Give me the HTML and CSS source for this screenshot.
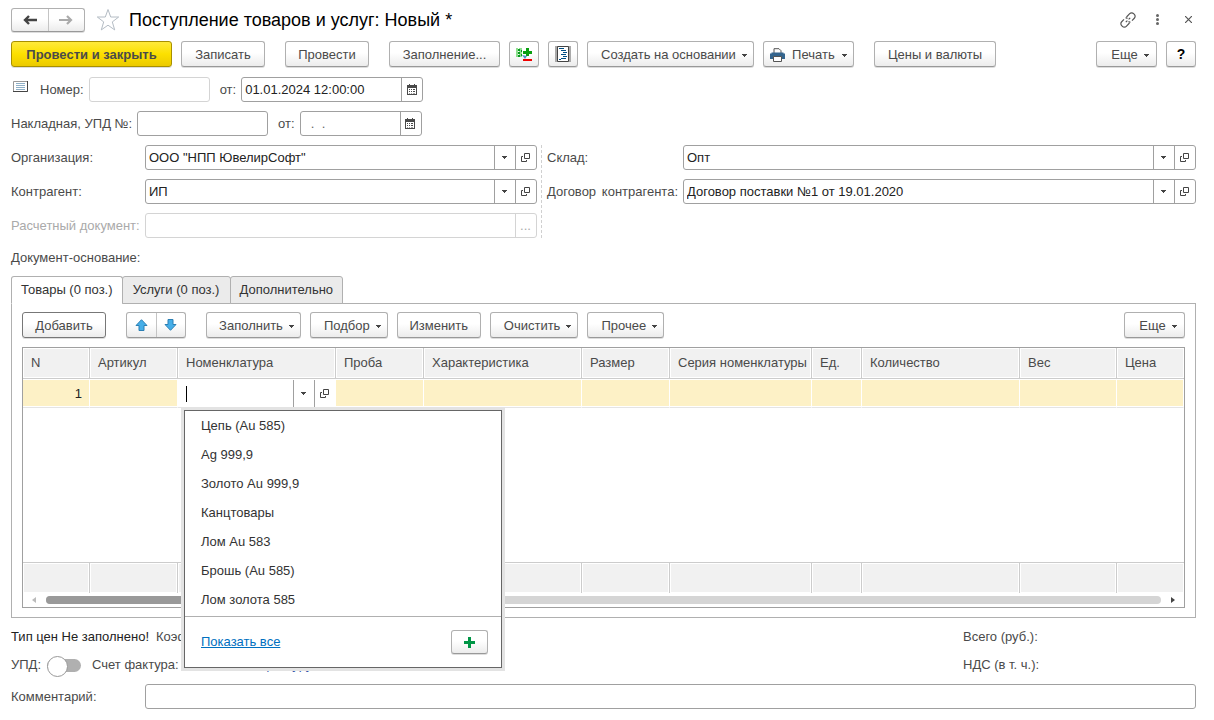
FILE: index.html
```html
<!DOCTYPE html>
<html lang="ru">
<head>
<meta charset="utf-8">
<title>Поступление товаров и услуг: Новый *</title>
<link rel="stylesheet" href="styles.css">
</head>
<body>
<svg class="sprite" aria-hidden="true">
  <symbol id="i-cal" viewBox="0 0 10 11"><path d="M0 1h10v10H0z" fill="#4a4a4a"/><path d="M2 0h1v2H2zM7 0h1v2H7z" fill="#4a4a4a"/><path d="M1 4h8v6H1z" fill="#fff"/><path d="M2 5h1v1H2zM4 5h1v1H4zM6 5h2v1H6zM2 7h1v1H2zM4 7h1v1H4zM6 7h2v1H6zM2 9h1v0.6H2zM4 9h1v0.6H4zM6 9h2v0.6H6z" fill="#4a4a4a"/></symbol>
  <symbol id="i-open" viewBox="0 0 9 9"><path d="M3.5.5h5v5h-5zM2 3.500H.5v5h5V7" fill="none" stroke="#444"/></symbol>
  <symbol id="i-caret" viewBox="0 0 5 3"><path d="M0 0h5v1H4v1H3v1H2V2H1V1H0z" fill="#444"/></symbol>
</svg>
<main class="form">
  <header class="titlebar">
    <div class="pair nav">
      <button aria-label="Назад"><svg width="14" height="10" viewBox="0 0 14 10"><path d="M6 1L2 5l4 4M1.500 5H14" fill="none" stroke="#444" stroke-width="2.400"/></svg></button>
      <button aria-label="Вперед"><svg width="14" height="10" viewBox="0 0 14 10"><path d="M8 1l4 4-4 4M12.500 5H0" fill="none" stroke="#aaa" stroke-width="2.200"/></svg></button>
    </div>
    <button class="plain" aria-label="В избранное"><svg width="24" height="24" viewBox="0 0 24 24"><path d="M12 1.500l2.700 7.500h8l-6.400 4.900 2.400 8L12 17.200l-6.700 4.700 2.400-8L1.300 9h8z" fill="#fff" stroke="#b4bcc4"/></svg></button>
    <h1>Поступление товаров и услуг: Новый *</h1>
    <div class="window-tools">
      <button class="plain" aria-label="Ссылка"><svg width="16" height="16" viewBox="0 0 16 16" fill="none" stroke="#555" stroke-width="1.200"><path d="M6.500 5l3.200-3.300a2.700 2.700 0 0 1 3.900 0l.7.7a2.700 2.700 0 0 1 0 3.900L12 8.600M10.500 10a2.600 2.600 0 0 1-2-.4M9.500 11l-3.200 3.300a2.700 2.700 0 0 1-3.900 0l-.7-.7a2.700 2.700 0 0 1 0-3.900L4 7.400M5.500 6a2.600 2.600 0 0 1 2 .4M5.800 10.200L7.400 8.600M8.600 7.400l1.600-1.600"/></svg></button>
      <button class="plain" aria-label="Меню"><svg width="3" height="11" viewBox="0 0 3 11" fill="#666"><circle cx="1.500" cy="1.500" r="1.500"/><circle cx="1.500" cy="5.500" r="1.500"/><circle cx="1.500" cy="9.500" r="1.500"/></svg></button>
      <button class="plain close" aria-label="Закрыть"><svg width="7" height="7" viewBox="0 0 7 7"><path d="M0 0l7 7M7 0L0 7" stroke="#555" stroke-width="1.200"/></svg></button>
    </div>
  </header>

  <div class="toolbar">
    <button class="btn primary">Провести и закрыть</button>
    <button class="btn w-s">Записать</button>
    <button class="btn apart w-s">Провести</button>
    <button class="btn apart w-l">Заполнение...</button>
    <button class="btn icon" aria-label="Добавить или убрать"><svg width="16" height="15" viewBox="0 0 16 15"><path d="M0 1h2v9H0zM3 1h3v9H3z" fill="#8fdf8f"/><path d="M2 2h2v2H2zM2 5h2v2H2zM2 8h2v2H2zM5 3h1v2H5zM5 7h1v2H5z" fill="#0a9a20"/><path d="M10 1h3v3h3v3h-3v2h-3V7H7V4h3z" fill="#0a9f10"/><path d="M6 8l3 4 2-3z" fill="#4a90c8"/><path d="M7 12h9v2H7z" fill="#f00000"/></svg></button>
    <button class="btn icon" aria-label="Структура подчиненности"><svg width="16" height="16" viewBox="0 0 16 16"><path d="M0 0h16v16H0z" fill="#aaa"/><path d="M2.500.5h11v15h-11z" fill="#fff" stroke="#444"/><path d="M4 2h5v1H4zM6 4h5v1H6zM8 6h4v1H8zM6 8h5v1H6zM8 10h4v1H8zM6 12h5v1H6zM4 13h2v1H4z" fill="#004f86"/></svg></button>
    <button class="btn menu">Создать на основании<svg class="caret"><use href="#i-caret"/></svg></button>
    <button class="btn menu print"><svg width="15" height="14" viewBox="0 0 15 14"><path d="M4 5V.7h5L11 2.700V5" fill="#fff" stroke="#555"/><path d="M0 5.500h1.500V4.500h12v1H15V11H0z" fill="#34658e"/><path d="M3.500 8.500h8v5h-8z" fill="#fff" stroke="#555"/></svg>Печать<svg class="caret"><use href="#i-caret"/></svg></button>
    <button class="btn apart">Цены и валюты</button>
    <button class="btn menu last">Еще<svg class="caret"><use href="#i-caret"/></svg></button>
    <button class="btn icon help">?</button>
  </div>

  <div class="row">
    <svg class="doc-icon" width="16" height="12" viewBox="0 0 16 12"><path d="M.5.500h14v10H.5z" fill="#fff" stroke="#999"/><path d="M14.500 0v10.500H0" fill="none" stroke="#444"/><path d="M3 2.500h9M3 4.500h9M3 6.500h9M3 8.500h9" stroke="#8fb0c8"/></svg>
    <label for="num">Номер:</label>
    <span class="field off w-number"><input id="num" disabled></span>
    <label class="from" for="date">от:</label>
    <span class="field w-datetime"><input id="date" value="01.01.2024 12:00:00"><button aria-label="Выбрать дату"><svg width="10" height="11"><use href="#i-cal"/></svg></button></span>
  </div>
  <div class="row">
    <label for="inv">Накладная, УПД №:</label>
    <span class="field w-invoice"><input id="inv"></span>
    <label class="from" for="invdate">от:</label>
    <span class="field w-date"><input id="invdate" value="  .  ."><button aria-label="Выбрать дату"><svg width="10" height="11"><use href="#i-cal"/></svg></button></span>
  </div>

  <div class="columns">
    <div class="col">
      <div class="line"><label for="org">Организация:</label><span class="field"><input id="org" value='ООО "НПП ЮвелирСофт"'><button aria-label="Список"><svg class="caret"><use href="#i-caret"/></svg></button><button aria-label="Открыть"><svg width="9" height="9"><use href="#i-open"/></svg></button></span></div>
      <div class="line"><label for="agent">Контрагент:</label><span class="field"><input id="agent" value="ИП"><button aria-label="Список"><svg class="caret"><use href="#i-caret"/></svg></button><button aria-label="Открыть"><svg width="9" height="9"><use href="#i-open"/></svg></button></span></div>
      <div class="line muted"><label for="settle">Расчетный документ:</label><span class="field off"><input id="settle" disabled><button disabled>...</button></span></div>
    </div>
    <div class="col right">
      <div class="line"><label for="store">Склад:</label><span class="field"><input id="store" value="Опт"><button aria-label="Список"><svg class="caret"><use href="#i-caret"/></svg></button><button aria-label="Открыть"><svg width="9" height="9"><use href="#i-open"/></svg></button></span></div>
      <div class="line"><label class="spread" for="contract">Договор контрагента:</label><span class="field"><input id="contract" value="Договор поставки №1 от 19.01.2020"><button aria-label="Список"><svg class="caret"><use href="#i-caret"/></svg></button><button aria-label="Открыть"><svg width="9" height="9"><use href="#i-open"/></svg></button></span></div>
    </div>
  </div>
  <p class="basis">Документ-основание:</p>

  <div class="tabs" role="tablist">
    <button role="tab" aria-selected="true" class="tab active">Товары (0 поз.)</button>
    <button role="tab" class="tab">Услуги (0 поз.)</button>
    <button role="tab" class="tab">Дополнительно</button>
  </div>
  <section class="panel">
    <div class="toolbar">
      <button class="btn default w-s">Добавить</button>
      <div class="pair move">
        <button aria-label="Вверх"><svg width="13" height="12" viewBox="0 0 13 12"><path d="M6.500.7l5.500 5.800H9v5H4v-5H1z" fill="#45aee8" stroke="#2b7fb4"/></svg></button>
        <button aria-label="Вниз"><svg width="13" height="12" viewBox="0 0 13 12"><path d="M6.500 11.300L12 5.500H9v-5H4v5H1z" fill="#45aee8" stroke="#2b7fb4"/></svg></button>
      </div>
      <button class="btn menu apart w-m">Заполнить<svg class="caret"><use href="#i-caret"/></svg></button>
      <button class="btn menu">Подбор<svg class="caret"><use href="#i-caret"/></svg></button>
      <button class="btn w-s">Изменить</button>
      <button class="btn menu">Очистить<svg class="caret"><use href="#i-caret"/></svg></button>
      <button class="btn menu">Прочее<svg class="caret"><use href="#i-caret"/></svg></button>
      <button class="btn menu last">Еще<svg class="caret"><use href="#i-caret"/></svg></button>
    </div>
    <div class="grid">
      <table>
        <colgroup><col class="c-n"><col class="c-s"><col class="c-l"><col class="c-s"><col class="c-l"><col class="c-s"><col class="c-series"><col class="c-unit"><col class="c-l"><col class="c-weight"><col></colgroup>
        <thead><tr><th>N</th><th>Артикул</th><th>Номенклатура</th><th>Проба</th><th>Характеристика</th><th>Размер</th><th>Серия номенклатуры</th><th>Ед.</th><th>Количество</th><th>Вес</th><th>Цена</th></tr></thead>
        <tbody>
          <tr class="current"><td class="num">1</td><td></td>
            <td class="edit">
              <div class="editor"><span class="cursor"></span><input aria-label="Номенклатура"><button aria-label="Список"><svg class="caret"><use href="#i-caret"/></svg></button><button aria-label="Открыть"><svg width="9" height="9"><use href="#i-open"/></svg></button></div>
              <div class="popup">
                <ul>
                  <li>Цепь (Au 585)</li><li>Ag 999,9</li><li>Золото Au 999,9</li><li>Канцтовары</li><li>Лом Au 583</li><li>Брошь (Au 585)</li><li>Лом золота 585</li>
                </ul>
                <div class="popup-foot"><a href="#">Показать все</a><button class="btn" aria-label="Создать"><svg width="11" height="11" viewBox="0 0 11 11"><path d="M4 0h3v4h4v3H7v4H4V7H0V4h4z" fill="#009646"/></svg></button></div>
              </div>
            </td>
            <td></td><td></td><td></td><td></td><td></td><td></td><td></td><td></td></tr>
          <tr class="blank"><td colspan="11"></td></tr>
        </tbody>
        <tfoot><tr><td></td><td></td><td></td><td></td><td></td><td></td><td></td><td></td><td></td><td></td><td></td></tr></tfoot>
      </table>
      <div class="scroll"><svg width="4" height="6" viewBox="0 0 4 6"><path d="M4 0v6L0 3z" fill="#bbb"/></svg><div class="track"><div class="thumb"></div></div><svg width="4" height="6" viewBox="0 0 4 6"><path d="M0 0v6l4-3z" fill="#444"/></svg></div>
    </div>
  </section>

  <div class="summary">
    <div class="sum-line"><span class="strong">Тип цен Не заполнено!</span><span>Коэф.:</span></div>
    <div>Всего (руб.):</div>
    <div class="sum-line"><label for="upd">УПД:</label><input type="checkbox" id="upd" class="switch"><span class="invoice">Счет фактура: <a href="#">Ввести счет-фактуру</a></span></div>
    <div>НДС (в т. ч.):</div>
  </div>
  <div class="line"><label for="comment">Комментарий:</label><span class="field"><input id="comment"></span></div>
</main>
</body>
</html>
```
FILE: styles.css
```css
* { box-sizing: border-box; }
body { margin: 0; background: #fff; color: #4a4a4a; font: 13px/16px "Liberation Sans", Arial, sans-serif; }
button, input { margin: 0; font: inherit; color: inherit; }
button { padding: 0; }
svg { display: block; flex: none; }
.sprite { position: absolute; width: 0; height: 0; }
.caret { width: 5px; height: 3px; }
.form { padding: 7px 18px 11px 11px; }

.titlebar { display: flex; align-items: center; height: 25px; }
h1 { margin: 0 0 0 9px; font-size: 18px; line-height: 24px; font-weight: 400; color: #000; }
.plain { border: 0; background: none; }
.nav + .plain { margin-left: 11px; }
.window-tools { display: flex; align-items: center; gap: 20px; margin: 0 4px 0 auto; }
.close { margin-left: 6px; }

.pair { display: flex; border: 1px solid #b0b0b0; border-bottom-color: #999; border-radius: 3px; background: linear-gradient(#fff 45%, #ececec); box-shadow: 0 1px 0 #ddd; }
.pair button { display: flex; align-items: center; justify-content: center; border: 0; background: none; }
.pair button + button { border-left: 1px solid #c4c4c4; }
.nav { width: 74px; height: 24px; }
.nav button { flex: 1; }
.move { width: 60px; height: 26px; margin-left: 11px; }
.move button { flex: 1; }

.toolbar { display: flex; gap: 9px; }
.form > .toolbar { margin: 9px 0 10px; }
.btn { display: flex; align-items: center; justify-content: center; height: 26px; padding: 2px 13px 0; border: 1px solid #b0b0b0; border-bottom-color: #999; border-radius: 3px; background: linear-gradient(#fff 45%, #ececec); box-shadow: 0 1px 0 #ddd; white-space: nowrap; }
.btn.w-s { width: 84px; padding-left: 0; padding-right: 0; }
.btn.w-l { width: 111px; padding-left: 0; padding-right: 0; }
.btn.menu { gap: 6px; padding-right: 6px; }
.btn.w-m { width: 95px; padding-left: 12px; }
.btn.apart { margin-left: 11px; }
.btn.icon { width: 30px; padding: 0; }
.btn.print { width: 91px; padding-left: 6px; gap: 7px; }
.btn.last { width: 61px; margin-left: auto; }
.btn.default { border-color: #777; }
.btn.help { font-weight: 700; font-size: 14px; color: #000; }
.btn.primary { width: 161px; font-weight: 700; border-color: #a89000; background: linear-gradient(#ffea3c, #fce000 50%, #ecca00); }

.row { display: flex; align-items: center; margin-bottom: 9px; }
.doc-icon { margin: 0 11px 6px 2px; }
.field { display: flex; height: 25px; border: 1px solid #a0a0a0; border-radius: 3px; background: #fff; color: #222; overflow: hidden; }
.field input { flex: 1; min-width: 0; padding: 0 3px; border: 0; background: none; }
.field button { display: flex; align-items: center; justify-content: center; width: 21px; padding-right: 1px; border: 0; border-left: 1px solid #a0a0a0; background: none; }
.field.off, .field.off button { border-color: #d4d4d4; color: #aaa; }
.row .field { margin-left: 5px; }
.from { margin-left: 10px; }
.w-number { width: 121px; }
.w-datetime { width: 182px; }
.w-invoice { width: 131px; }
.w-date { width: 122px; }
.w-date input { white-space: pre; color: #666; }

.columns { display: grid; grid-template-columns: 531fr 654fr; }
.col { display: grid; align-content: start; gap: 9px; padding-right: 4px; border-right: 1px dashed #d0d0d0; }
.col.right { padding: 0 0 0 5px; border: 0; }
.line { display: flex; align-items: center; }
.line label { width: 134px; white-space: nowrap; }
.right .line label { width: 136px; }
.right .line .spread { padding-right: 5px; text-align-last: justify; white-space: normal; }
.line .field { flex: 1; }
.muted { color: #aaa; }
.basis { margin: 12px 0 10px; }

.tabs { display: flex; }
.tab { height: 28px; min-width: 109px; margin: 0 0 -1px -1px; padding: 0 9px; border: 1px solid #b0b0b0; border-radius: 3px 3px 0 0; background: #ebebeb; color: #333; z-index: 1; }
.tab:first-child { margin-left: 0; }
.tab.active { border-bottom-color: #fff; background: #fff; }
.panel { padding: 8px 10px 9px; border: 1px solid #b0b0b0; }
.grid { margin-top: 9px; border: 1px solid #a0a0a0; }

table { width: 100%; table-layout: fixed; border-collapse: separate; border-spacing: 0; }
.c-n { width: 67px; }
.c-s { width: 88px; }
.c-l { width: 158px; }
.c-series { width: 142px; }
.c-unit { width: 50px; }
.c-weight { width: 97px; }
th, td { padding: 0; }
th { height: 31px; padding: 0 0 0 8px; border-right: 1px solid #ccc; border-bottom: 1px solid #ccc; background: #f1f1f1; box-shadow: inset 0 0 0 1px #fff; font-weight: 400; text-align: left; white-space: nowrap; }
th:last-child, tfoot td:last-child { border-right: 0; }
.current td { height: 29px; border-right: 1px solid #fff; border-top: 1px solid #fff; border-bottom: 1px solid #e4e4e4; background: #fdf1c6; box-shadow: inset 0 -1px 0 #fff; }
.current .num { padding-right: 7px; color: #222; text-align: right; }
.current .edit { position: relative; background: #fff; }
.editor { display: flex; align-items: center; height: 27px; }
.editor input { flex: 1; min-width: 0; border: 0; background: none; }
.editor button { display: flex; align-items: center; justify-content: center; align-self: stretch; width: 21px; padding-right: 1px; border: 0; border-left: 1px solid #a0a0a0; background: #fff; }
.cursor { width: 1px; height: 16px; margin-left: 8px; background: #000; }
.blank td { height: 154px; }
tfoot td { height: 31px; border-top: 1px solid #ccc; border-right: 1px solid #ccc; background: #f1f1f1; box-shadow: inset 0 0 0 1px #fff; }

.scroll { display: flex; align-items: center; gap: 10px; height: 14px; padding: 0 9px; }
.track { flex: 1; height: 8px; border-radius: 4px; background: #d5d5d5; }
.thumb { width: 40%; height: 8px; border-radius: 4px; background: #999; }

.popup { position: absolute; z-index: 2; top: 30px; left: 6px; width: 318px; border: 1px solid #666; background: #fff; box-shadow: 0 0 0 3px #e3e3e3; color: #333; }
.popup ul { margin: 0; padding: 0 0 2px; list-style: none; }
.popup li { padding: 0 16px; line-height: 29px; }
.popup-foot { display: flex; align-items: center; justify-content: space-between; height: 51px; padding: 0 13px 0 16px; border-top: 1px solid #b0b0b0; }
.popup-foot .btn { width: 37px; height: 24px; padding: 0; }
.popup a { color: #0070c0; }

.summary { display: grid; grid-template-columns: 1fr 233px; row-gap: 8px; align-items: center; margin: 9px 0; }
.summary > div { height: 20px; line-height: 20px; }
.sum-line { display: flex; align-items: center; gap: 7px; }
.strong { color: #222; }
.invoice a { margin-left: 4px; color: #3355aa; }
.switch { position: relative; width: 34px; height: 13px; margin: 0 4px 0 -1px; border-radius: 7px; appearance: none; background: #b0b0b0; }
.switch::before { content: ""; position: absolute; top: -3px; left: 0; width: 19px; height: 19px; border: 1px solid #999; border-radius: 50%; background: #fff; }
```
